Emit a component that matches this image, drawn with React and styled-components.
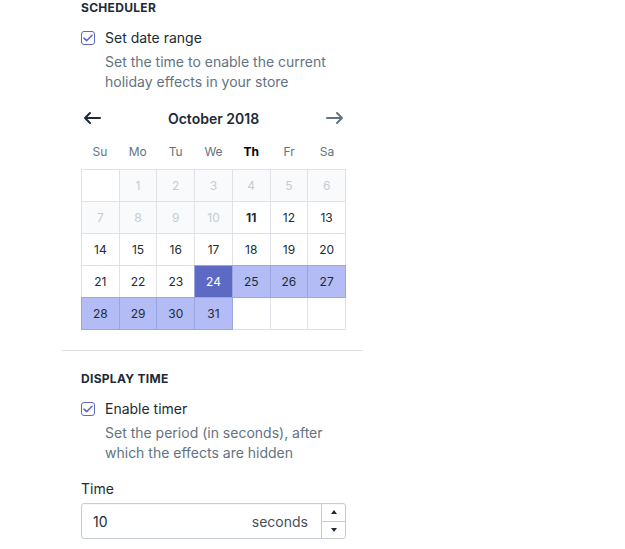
import React from 'react'
import styled, { createGlobalStyle } from 'styled-components'

const GlobalStyle = createGlobalStyle`
  body {
    margin: 0;
    background: #fff;
    font-family: Inter, "Noto Sans", sans-serif;
    color: #212b36;
    -webkit-font-smoothing: antialiased;
  }
`

const Panel = styled.div`
  margin-left: 62px;
  width: 301px;
`

const Section = styled.section`
  padding: ${({ first }) => (first ? '0' : '20px')} 17px 20px 19px;
  border-top: ${({ first }) => (first ? 'none' : '1px solid #e1e3e5')};
`

const Heading = styled.h3`
  margin: 0;
  font-size: 12px;
  line-height: 16px;
  font-weight: 700;
  letter-spacing: 0.3px;
  text-transform: uppercase;
  color: #212b36;
`

const CheckRow = styled.label`
  display: flex;
  align-items: center;
  gap: 10px;
  margin-top: 12px;
  font-size: 14px;
  line-height: 20px;
`

const Box = styled.span`
  width: 14px;
  height: 14px;
  box-sizing: border-box;
  border: 1.5px solid #5c6ac4;
  border-radius: 3px;
  display: flex;
  align-items: center;
  justify-content: center;
`

const Help = styled.p`
  margin: 4px 0 0 24px;
  font-size: 14px;
  line-height: 20px;
  color: #637381;
`

const CalHeader = styled.div`
  display: flex;
  align-items: center;
  justify-content: space-between;
  height: 24px;
  margin-top: 14px;
  padding: 0 2px;
`

const Month = styled.div`
  font-size: 14px;
  font-weight: 600;
  color: #212b36;
`

const Week = styled.div`
  display: grid;
  grid-template-columns: repeat(7, 1fr);
  margin-top: 12px;
  width: 265px;
`

const WeekDay = styled.div`
  text-align: center;
  font-size: 12px;
  line-height: 20px;
  color: ${({ today }) => (today ? '#000' : '#637381')};
  font-weight: ${({ today }) => (today ? 700 : 400)};
`

const Grid = styled.div`
  display: grid;
  grid-template-columns: repeat(7, 1fr);
  width: 265px;
  margin-top: 7px;
  padding: 1px 0 0 1px;
  box-sizing: border-box;
`

const bgFor = {
  empty: '#fff',
  past: '#f9fafb',
  day: '#fff',
  start: '#5c6ac4',
  range: '#b3bcf5',
}

const Cell = styled.div`
  height: 33px;
  box-sizing: border-box;
  margin: -1px 0 0 -1px;
  border: 1px solid ${({ kind }) => (kind === 'range' || kind === 'start' ? '#9ba5e0' : '#dfe3e8')};
  position: relative;
  z-index: ${({ kind }) => (kind === 'range' || kind === 'start' ? 1 : 0)};
  background: ${({ kind }) => bgFor[kind]};
  display: flex;
  align-items: center;
  justify-content: center;
  font-size: 12px;
  color: ${({ kind }) => (kind === 'past' ? '#c4cdd5' : kind === 'start' ? '#fff' : '#212b36')};
  font-weight: ${({ today }) => (today ? 700 : 400)};
`

const FieldLabel = styled.div`
  margin-top: 16px;
  font-size: 14px;
  line-height: 20px;
`

const Field = styled.div`
  margin-top: 4px;
  width: 265px;
  height: 36px;
  box-sizing: border-box;
  border: 1px solid #c4cdd5;
  border-radius: 3px;
  box-shadow: inset 0 1px 0 0 rgba(99, 115, 129, 0.05);
  display: flex;
  align-items: stretch;
`

const Value = styled.div`
  flex: 1;
  display: flex;
  align-items: center;
  padding: 0 11px;
  font-size: 14px;
`

const Suffix = styled.span`
  margin-left: auto;
  padding-right: 2px;
  color: #454f5b;
`

const Stepper = styled.div`
  width: 23px;
  border-left: 1px solid #c4cdd5;
  display: flex;
  flex-direction: column;
`

const Step = styled.div`
  flex: 1;
  display: flex;
  align-items: center;
  justify-content: center;
  border-top: ${({ down }) => (down ? '1px solid #c4cdd5' : 'none')};
`

const Arrow = ({ dir, color }) => (
  <svg width="18" height="14" viewBox="0 0 18 14" fill="none">
    {dir === 'left' ? (
      <path d="M17 7H2M7 2L2 7l5 5" stroke={color} strokeWidth="2" strokeLinecap="round" strokeLinejoin="round" />
    ) : (
      <path d="M1 7h15M11 2l5 5-5 5" stroke={color} strokeWidth="2" strokeLinecap="round" strokeLinejoin="round" />
    )}
  </svg>
)

const Check = () => (
  <svg width="10" height="8" viewBox="0 0 10 8" fill="none">
    <path d="M1 4.2l2.6 2.5L9 1.3" stroke="#5c6ac4" strokeWidth="1.6" strokeLinecap="round" strokeLinejoin="round" />
  </svg>
)

const weekdays = ['Su', 'Mo', 'Tu', 'We', 'Th', 'Fr', 'Sa']

const buildDays = () => {
  const cells = [{ kind: 'empty', label: '' }]
  for (let d = 1; d <= 31; d++) {
    let kind = 'day'
    if (d < 11) kind = 'past'
    else if (d === 24) kind = 'start'
    else if (d > 24) kind = 'range'
    cells.push({ kind, label: d, today: d === 11 })
  }
  while (cells.length < 35) cells.push({ kind: 'empty', label: '' })
  return cells
}

const App = () => {
  const days = buildDays()
  return (
    <>
      <GlobalStyle />
      <Panel>
        <Section first>
          <Heading>Scheduler</Heading>
          <CheckRow>
            <Box><Check /></Box>
            Set date range
          </CheckRow>
          <Help>Set the time to enable the current holiday effects in your store</Help>
          <CalHeader>
            <Arrow dir="left" color="#212b36" />
            <Month>October 2018</Month>
            <Arrow dir="right" color="#637381" />
          </CalHeader>
          <Week>
            {weekdays.map((w) => (
              <WeekDay key={w} today={w === 'Th'}>{w}</WeekDay>
            ))}
          </Week>
          <Grid>
            {days.map((c, i) => (
              <Cell key={i} kind={c.kind} today={c.today}>{c.label}</Cell>
            ))}
          </Grid>
        </Section>
        <Section>
          <Heading>Display time</Heading>
          <CheckRow>
            <Box><Check /></Box>
            Enable timer
          </CheckRow>
          <Help>Set the period (in seconds), after which the effects are hidden</Help>
          <FieldLabel>Time</FieldLabel>
          <Field>
            <Value>
              10
              <Suffix>seconds</Suffix>
            </Value>
            <Stepper>
              <Step>
                <svg width="6" height="4" viewBox="0 0 6 4"><path d="M0 4L3 0l3 4z" fill="#212b36" /></svg>
              </Step>
              <Step down>
                <svg width="6" height="4" viewBox="0 0 6 4"><path d="M0 0h6L3 4z" fill="#212b36" /></svg>
              </Step>
            </Stepper>
          </Field>
        </Section>
      </Panel>
    </>
  )
}

export default App
